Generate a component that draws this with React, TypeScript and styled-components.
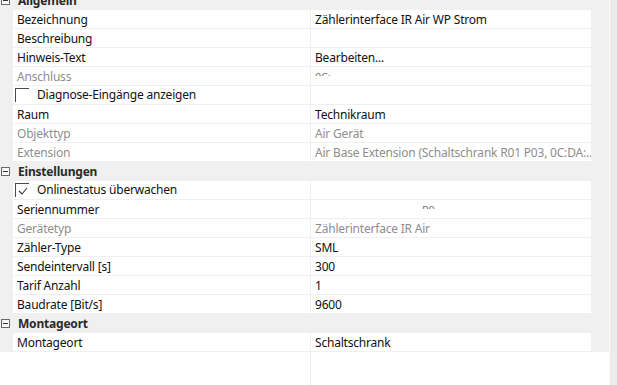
import React from 'react'
import styled, { createGlobalStyle } from 'styled-components'

const GlobalStyle = createGlobalStyle`
  html, body {
    margin: 0;
    padding: 0;
    background: #ffffff;
  }
  body {
    font-family: 'Segoe UI', 'Noto Sans', 'Liberation Sans', sans-serif;
    font-size: 12px;
    letter-spacing: -0.2px;
    color: #111111;
  }
`

const Window = styled.div`
  width: 617px;
  height: 385px;
  display: flex;
  overflow: hidden;
  background: #ffffff;
`

const Grid = styled.div`
  width: 609px;
  display: flex;
  flex-direction: column;
  overflow: hidden;
`

const List = styled.div`
  display: flex;
  flex-direction: column;
  gap: 1px;
  background: #f0f0f0;
  margin-top: -9px; /* scrolled */
  padding-bottom: 1px;
`

const HeaderRow = styled.div`
  height: 18px;
  display: flex;
  align-items: center;
  background: #f0f0f0;
`

const Toggle = styled.span`
  width: 7px;
  height: 7px;
  margin-left: 1px;
  border: 1px solid #6a6a6a;
  display: flex;
  align-items: center;
  justify-content: center;
  background: #fafafa;
  &::after {
    content: '';
    width: 5px;
    height: 1px;
    background: #333;
  }
`

const HeaderText = styled.span`
  margin-left: 8px;
  font-weight: 700;
  color: #2a2a2a;
`

const Row = styled.div`
  height: 18px;
  display: grid;
  grid-template-columns: 297px 280px;
  column-gap: 1px;
  margin-left: 13px;
  width: 578px;
  background: #f0f0f0;
`

const Cell = styled.div<{ $disabled?: boolean }>`
  background: #ffffff;
  display: flex;
  align-items: center;
  padding-left: 4px;
  white-space: nowrap;
  overflow: hidden;
  color: ${({ $disabled }) => ($disabled ? '#8e8e8e' : '#111111')};
`

const ClipCell = styled.div<{ $offset: number }>`
  background: #ffffff;
  overflow: hidden;
  padding-left: ${({ $offset }) => $offset}px;
`

const ClipText = styled.div`
  height: 4px;
  margin-top: 5px;
  overflow: hidden;
  font-size: 11px;
  line-height: 11px;
  color: #7a7a7a;
  & > span {
    display: block;
    margin-top: -1px;
  }
`

const CheckCell = styled.div`
  background: #ffffff;
  display: flex;
  align-items: flex-start;
  padding-left: 2px;
  white-space: nowrap;
`

const Box = styled.span`
  width: 13px;
  height: 13px;
  margin-top: 2px;
  border-top: 1px solid #4a4a4a;
  border-left: 1px solid #4a4a4a;
  display: flex;
  align-items: center;
  justify-content: center;
`

const CheckLabel = styled.span`
  margin-left: 8px;
  line-height: 18px;
`

const Filler = styled.div`
  flex: 1;
  display: grid;
  grid-template-columns: 310px 1px;
  & > div:last-child {
    background: #f0f0f0;
  }
`

const Scrollbar = styled.div`
  width: 7px;
  border-left: 1px solid #fafafa;
  background: #ececec;
`

type Item =
  | { kind: 'prop'; label: string; value: string; disabled?: boolean }
  | { kind: 'clip'; label: string; value: string; offset: number; disabled?: boolean }
  | { kind: 'check'; label: string; checked: boolean }

type Section = { title: string; items: Item[] }

const sections: Section[] = [
  {
    title: 'Allgemein',
    items: [
      { kind: 'prop', label: 'Bezeichnung', value: 'Zählerinterface IR Air WP Strom' },
      { kind: 'prop', label: 'Beschreibung', value: '' },
      { kind: 'prop', label: 'Hinweis-Text', value: 'Bearbeiten...' },
      { kind: 'clip', label: 'Anschluss', value: '0C:', offset: 4, disabled: true },
      { kind: 'check', label: 'Diagnose-Eingänge anzeigen', checked: false },
      { kind: 'prop', label: 'Raum', value: 'Technikraum' },
      { kind: 'prop', label: 'Objekttyp', value: 'Air Gerät', disabled: true },
      {
        kind: 'prop',
        label: 'Extension',
        value: 'Air Base Extension (Schaltschrank R01 P03, 0C:DA:...',
        disabled: true,
      },
    ],
  },
  {
    title: 'Einstellungen',
    items: [
      { kind: 'check', label: 'Onlinestatus überwachen', checked: true },
      { kind: 'clip', label: 'Seriennummer', value: 'P0', offset: 111 },
      { kind: 'prop', label: 'Gerätetyp', value: 'Zählerinterface IR Air', disabled: true },
      { kind: 'prop', label: 'Zähler-Type', value: 'SML' },
      { kind: 'prop', label: 'Sendeintervall [s]', value: '300' },
      { kind: 'prop', label: 'Tarif Anzahl', value: '1' },
      { kind: 'prop', label: 'Baudrate [Bit/s]', value: '9600' },
    ],
  },
  {
    title: 'Montageort',
    items: [{ kind: 'prop', label: 'Montageort', value: 'Schaltschrank' }],
  },
]

const Check = () => (
  <svg width="10" height="8" viewBox="0 0 10 8">
    <path d="M1 4 L4 7 L9 1" fill="none" stroke="#333" strokeWidth="1.1" />
  </svg>
)

const PropRow: React.FC<{ item: Item }> = ({ item }) => {
  if (item.kind === 'check') {
    return (
      <Row>
        <CheckCell>
          <Box>{item.checked ? <Check /> : null}</Box>
          <CheckLabel>{item.label}</CheckLabel>
        </CheckCell>
        <Cell />
      </Row>
    )
  }
  if (item.kind === 'clip') {
    return (
      <Row>
        <Cell $disabled={item.disabled}>{item.label}</Cell>
        <ClipCell $offset={item.offset}>
          <ClipText>
            <span>{item.value}</span>
          </ClipText>
        </ClipCell>
      </Row>
    )
  }
  return (
    <Row>
      <Cell $disabled={item.disabled}>{item.label}</Cell>
      <Cell $disabled={item.disabled}>{item.value}</Cell>
    </Row>
  )
}

export default function App() {
  return (
    <>
      <GlobalStyle />
      <Window>
        <Grid>
          <List>
            {sections.map((s) => (
              <React.Fragment key={s.title}>
                <HeaderRow>
                  <Toggle />
                  <HeaderText>{s.title}</HeaderText>
                </HeaderRow>
                {s.items.map((it) => (
                  <PropRow key={it.label} item={it} />
                ))}
              </React.Fragment>
            ))}
          </List>
          <Filler>
            <div />
            <div />
          </Filler>
        </Grid>
        <Scrollbar />
      </Window>
    </>
  )
}
